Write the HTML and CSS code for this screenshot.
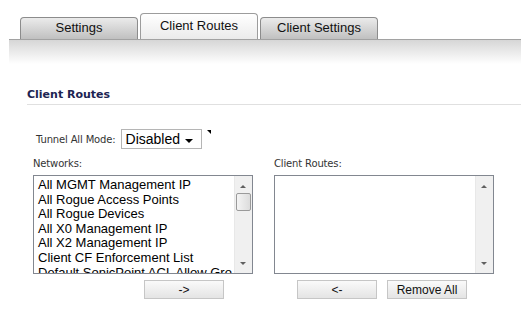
FILE: index.html
```html
<!DOCTYPE html>
<html lang="en">
<head>
  <meta charset="UTF-8" />
  <title>Client Routes</title>
  <link rel="stylesheet" href="styles.css">
</head>
<body>
  <div class="tabs">
    <div class="tab">Settings</div>
    <div class="tab active">Client Routes</div>
    <div class="tab">Client Settings</div>
  </div>
  <div class="band"></div>

  <div class="section">
    <h2>Client Routes</h2>

    <div class="mode">
      <span class="label">Tunnel All Mode:</span>
      <div class="select">Disabled <span class="caret"></span></div>
      <span class="marker"></span>
    </div>

    <div class="lists">
      <div class="col">
        <div class="label">Networks:</div>
        <div class="listbox">
          <div class="items">
            <div>All MGMT Management IP</div>
            <div>All Rogue Access Points</div>
            <div>All Rogue Devices</div>
            <div>All X0 Management IP</div>
            <div>All X2 Management IP</div>
            <div>Client CF Enforcement List</div>
            <div>Default SonicPoint ACL Allow Gro</div>
          </div>
          <div class="scroll">
            <span class="up"></span>
            <span class="thumb"></span>
            <span class="down"></span>
          </div>
        </div>
        <div class="buttons">
          <button>-&gt;</button>
        </div>
      </div>
      <div class="col">
        <div class="label">Client Routes:</div>
        <div class="listbox">
          <div class="items"></div>
          <div class="scroll">
            <span class="up"></span>
            <span class="down"></span>
          </div>
        </div>
        <div class="buttons right">
          <button>&lt;-</button>
          <button>Remove All</button>
        </div>
      </div>
    </div>
  </div>
</body>
</html>
```

FILE: styles.css
```css
body {
  margin: 0;
  background: #fff;
  font-family: "Liberation Sans", Arial, sans-serif;
  color: #000;
}
.tabs {
  display: flex;
  align-items: flex-end;
  gap: 2px;
  height: 39px;
  padding-left: 20px;
  box-sizing: border-box;
}
.tab {
  width: 118px;
  height: 22px;
  box-sizing: border-box;
  border: 1px solid #8c8c8c;
  border-bottom: none;
  border-radius: 4px 4px 0 0;
  background: linear-gradient(#ebebeb, #c0c0c0);
  font-size: 13px;
  text-align: center;
  line-height: 19px;
  color: #111;
}
.tab.active {
  height: 26px;
  line-height: 24px;
  background: linear-gradient(#ffffff, #ebebeb);
  border-color: #9c9c9c;
}
.band {
  margin-left: 9px;
  height: 24px;
  border-top: 1px solid #a2a2a2;
  background: linear-gradient(#d6d6d6, #ffffff);
}
.section {
  padding: 24px 0 0 27px;
}
h2 {
  margin: 0;
  font-family: "DejaVu Sans", Verdana, sans-serif;
  font-size: 11px;
  font-weight: bold;
  color: #1c2452;
  padding-bottom: 3px;
  border-bottom: 1px solid #e0e0e0;
}
.label {
  font-family: "DejaVu Sans", Tahoma, sans-serif;
  font-size: 10px;
  letter-spacing: -0.15px;
  color: #333;
}
.mode {
  display: flex;
  align-items: center;
  margin-top: 24px;
  padding-left: 9px;
  position: relative;
}
.mode .label {
  margin-right: 5px;
}
.select {
  width: 81px;
  height: 20px;
  box-sizing: border-box;
  border: 1px solid #b5b5b5;
  font-size: 14px;
  line-height: 18px;
  padding-left: 4px;
  display: flex;
  align-items: center;
}
.caret {
  width: 0;
  height: 0;
  border-left: 4px solid transparent;
  border-right: 4px solid transparent;
  border-top: 4px solid #000;
  margin: 3px 8px 0 auto;
}
.marker {
  position: absolute;
  left: 180px;
  top: 1px;
  width: 0;
  height: 0;
  border-top: 4px solid #000;
  border-left: 4px solid transparent;
}
.lists {
  display: flex;
  gap: 21px;
  margin-top: 9px;
  padding-left: 6px;
}
.col {
  width: 220px;
}
.col .label {
  margin-bottom: 6px;
}
.listbox {
  height: 99px;
  box-sizing: border-box;
  border: 1px solid #828790;
  display: flex;
  overflow: hidden;
}
.items {
  flex: 1;
  padding: 2px 0 0 4px;
  font-size: 13px;
  line-height: 14.6px;
  white-space: nowrap;
  overflow: hidden;
}
.scroll {
  width: 17px;
  background: #f0f0f0;
  border-left: 1px solid #e8e8e8;
  position: relative;
}
.scroll .up, .scroll .down {
  position: absolute;
  left: 5px;
  width: 0;
  height: 0;
  border-left: 3px solid transparent;
  border-right: 3px solid transparent;
}
.scroll .up {
  top: 9px;
  border-bottom: 3px solid #606060;
}
.scroll .down {
  bottom: 8px;
  border-top: 3px solid #606060;
}
.scroll .thumb {
  position: absolute;
  top: 17px;
  left: 1px;
  width: 13px;
  height: 16px;
  border: 1px solid #9a9a9a;
  border-radius: 2px;
  background: linear-gradient(90deg, #f4f4f4, #dcdcdc);
}
.buttons {
  display: flex;
  gap: 10px;
  padding-left: 111px;
  margin-top: 6px;
}
.buttons.right {
  padding-left: 23px;
}
button {
  width: 80px;
  height: 19px;
  border: 1px solid #c6c6c6;
  background: linear-gradient(#fafafa, #e4e4e4);
  font-family: "Liberation Sans", Arial, sans-serif;
  font-size: 12px;
  color: #111;
  padding: 0;
}
```
